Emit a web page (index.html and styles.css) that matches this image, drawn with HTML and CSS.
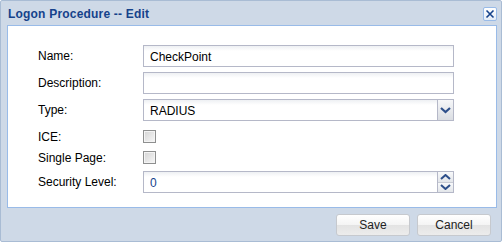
FILE: index.html
```html
<!DOCTYPE html>
<html lang="en">
<head>
  <meta charset="UTF-8">
  <title>Logon Procedure -- Edit</title>
  <link rel="stylesheet" href="styles.css">
</head>
<body>
  <div class="window">
    <div class="window-header">
      <span class="window-title">Logon Procedure -- Edit</span>
      <span class="tool-close">
        <svg width="10" height="10" viewBox="0 0 10 10"><path d="M1.5 1.5 L8.5 8.5 M8.5 1.5 L1.5 8.5" stroke="#15428b" stroke-width="1.6" fill="none"/></svg>
      </span>
    </div>

    <div class="window-body">
      <div class="form-row text-row">
        <label>Name:</label>
        <div class="field"><input class="text-input" type="text" value="CheckPoint"></div>
      </div>
      <div class="form-row text-row">
        <label>Description:</label>
        <div class="field"><input class="text-input" type="text" value=""></div>
      </div>
      <div class="form-row text-row">
        <label>Type:</label>
        <div class="field trigger-field">
          <input class="text-input" type="text" value="RADIUS">
          <span class="trigger">
            <svg width="11" height="7" viewBox="0 0 11 7"><path d="M1 1 L5.5 5 L10 1" stroke="#2d4f8a" stroke-width="2.2" fill="none"/></svg>
          </span>
        </div>
      </div>
      <div class="form-row check-row first-check">
        <label>ICE:</label>
        <div class="field"><span class="checkbox"></span></div>
      </div>
      <div class="form-row check-row">
        <label>Single Page:</label>
        <div class="field"><span class="checkbox"></span></div>
      </div>
      <div class="form-row text-row">
        <label>Security Level:</label>
        <div class="field trigger-field">
          <input class="text-input number" type="text" value="0">
          <span class="spinner">
            <span class="spin-half">
              <svg width="11" height="6" viewBox="0 0 11 6"><path d="M1 5 L5.5 1 L10 5" stroke="#2d4f8a" stroke-width="2" fill="none"/></svg>
            </span>
            <span class="spin-half">
              <svg width="11" height="6" viewBox="0 0 11 6"><path d="M1 1 L5.5 5 L10 1" stroke="#2d4f8a" stroke-width="2" fill="none"/></svg>
            </span>
          </span>
        </div>
      </div>
    </div>

    <div class="window-footer">
      <button class="btn">Save</button>
      <button class="btn">Cancel</button>
    </div>
  </div>
</body>
</html>
```

FILE: styles.css
```css
body {
  margin: 0;
  font-family: 'Liberation Sans', Arial, sans-serif;
  font-size: 12px;
  background: #fff;
}

.window {
  width: 502px;
  height: 242px;
  box-sizing: border-box;
  border: 1px solid #a9bcd4;
  border-radius: 2px;
  background: #ced9e7;
  display: flex;
  flex-direction: column;
}

.window-header {
  height: 24px;
  display: flex;
  align-items: center;
  justify-content: space-between;
  padding: 0 4px 0 7px;
}

.window-title {
  font-weight: bold;
  font-size: 12px;
  letter-spacing: 0.2px;
  color: #15428b;
  position: relative;
  top: 1px;
}

.tool-close {
  width: 12px;
  height: 12px;
  border: 1px solid #99bbe8;
  border-radius: 2px;
  background: linear-gradient(#ffffff, #e4ecf7);
  display: flex;
  align-items: center;
  justify-content: center;
  margin-top: 1px;
}

.window-body {
  margin: 0 4px 0 6px;
  height: 183px;
  box-sizing: border-box;
  border: 1px solid #99bbe8;
  background: #fff;
  padding: 19px 0 0 30px;
}

.form-row {
  display: flex;
  align-items: center;
}

.form-row label {
  width: 105px;
  color: #000;
}

.text-row {
  height: 22px;
  margin-bottom: 5px;
}

.check-row {
  height: 21px;
}

.check-row.first-check {
  margin-top: 1px;
}

.check-row + .text-row {
  margin-top: 3px;
}

.field {
  display: flex;
  align-items: center;
}

.text-input {
  width: 311px;
  height: 22px;
  box-sizing: border-box;
  margin: 0;
  border: 1px solid #b5b8c8;
  background: linear-gradient(#eef0f3, #ffffff 5px);
  padding: 1px 6px 0;
  font-family: 'Liberation Sans', Arial, sans-serif;
  font-size: 12px;
  color: #000;
  outline: none;
}

.text-input.number {
  color: #15428b;
}

.trigger-field {
  position: relative;
}

.trigger {
  position: absolute;
  right: 0;
  top: 0;
  width: 17px;
  height: 22px;
  box-sizing: border-box;
  border: 1px solid #b5b8c8;
  background: linear-gradient(#f6f7f9, #dadde2);
  display: flex;
  align-items: center;
  justify-content: center;
}

.spinner {
  position: absolute;
  right: 0;
  top: 0;
  width: 17px;
  height: 22px;
  box-sizing: border-box;
  border: 1px solid #b5b8c8;
  display: flex;
  flex-direction: column;
}

.spin-half {
  flex: 1;
  display: flex;
  align-items: center;
  justify-content: center;
  background: linear-gradient(#f8f9fa, #e3e6ea);
}

.spin-half + .spin-half {
  border-top: 1px solid #c8cbd4;
}

.checkbox {
  width: 13px;
  height: 13px;
  box-sizing: border-box;
  border: 1px solid #8e8f8f;
  box-shadow: inset 0 0 0 1px #f4f4f4;
  background: linear-gradient(135deg, #d4d4d4, #f7f7f7);
}

.window-footer {
  flex: 1;
  display: flex;
  justify-content: flex-end;
  align-items: center;
  gap: 7px;
  padding: 0 10px 0 0;
}

.btn {
  width: 74px;
  height: 22px;
  border: 1px solid #c6c9ce;
  border-radius: 3px;
  background: linear-gradient(#ffffff 0%, #f4f4f4 50%, #e3e3e3 51%, #ececec 100%);
  font-family: 'Liberation Sans', Arial, sans-serif;
  font-size: 12px;
  color: #222;
  padding: 0;
  margin-top: 1px;
}
```
